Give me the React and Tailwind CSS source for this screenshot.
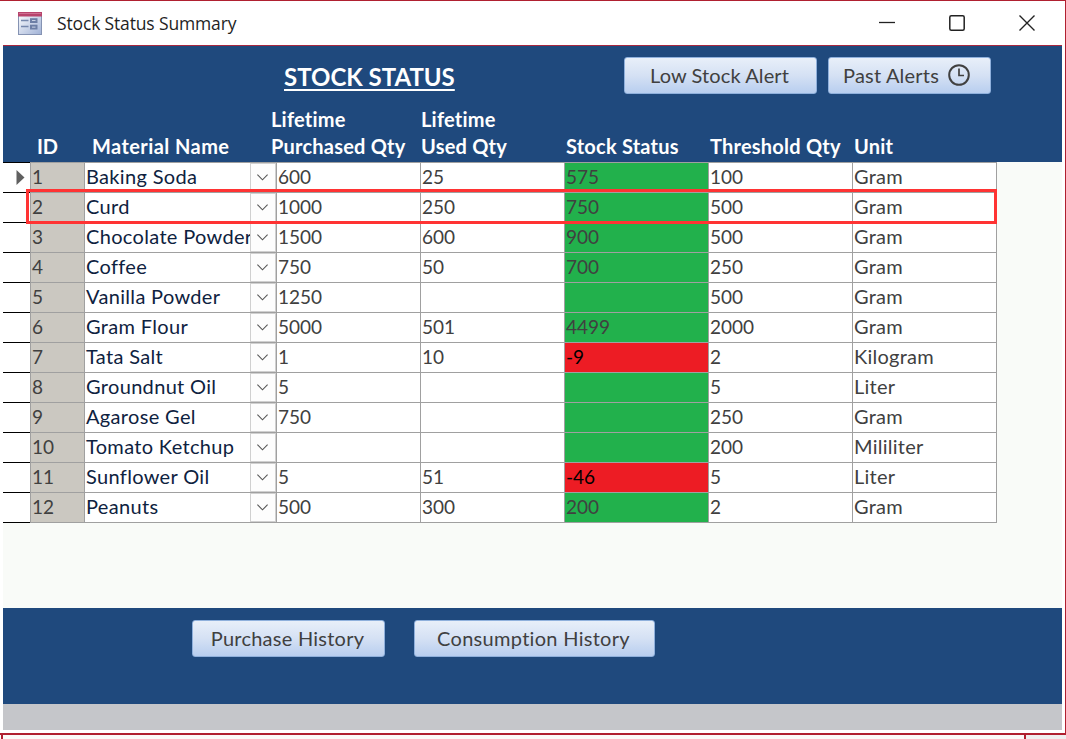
const rows = [
  ["1", "Baking Soda", "600", "25", "575", "100", "Gram"],
  ["2", "Curd", "1000", "250", "750", "500", "Gram"],
  ["3", "Chocolate Powder", "1500", "600", "900", "500", "Gram"],
  ["4", "Coffee", "750", "50", "700", "250", "Gram"],
  ["5", "Vanilla Powder", "1250", "", "", "500", "Gram"],
  ["6", "Gram Flour", "5000", "501", "4499", "2000", "Gram"],
  ["7", "Tata Salt", "1", "10", "-9", "2", "Kilogram"],
  ["8", "Groundnut Oil", "5", "", "", "5", "Liter"],
  ["9", "Agarose Gel", "750", "", "", "250", "Gram"],
  ["10", "Tomato Ketchup", "", "", "", "200", "Mililiter"],
  ["11", "Sunflower Oil", "5", "51", "-46", "5", "Liter"],
  ["12", "Peanuts", "500", "300", "200", "2", "Gram"],
];

function TitleBar() {
  return (
    <div className="flex h-[44px] shrink-0 items-center bg-white pl-[18px]">
      <svg width="24" height="23" viewBox="0 0 24 23" className="shrink-0">
        <defs>
          <linearGradient id="formBody" x1="0" y1="0" x2="1" y2="1">
            <stop offset="0" stopColor="#ffffff" />
            <stop offset="1" stopColor="#9fb1d6" />
          </linearGradient>
        </defs>
        <rect x="0.5" y="0.5" width="23" height="22" fill="url(#formBody)" stroke="#8593b3" />
        <rect x="0" y="0" width="24" height="4.5" fill="#b8446c" />
        <rect x="1" y="1" width="22" height="1" fill="#cf6f92" />
        <path d="M3 8.5H10.5M3 14.5H10.5" stroke="#7688ad" strokeWidth="1.6" />
        <rect x="13" y="7.2" width="5.5" height="2.8" fill="#dfe6f4" stroke="#6d7fa6" strokeWidth="2" />
        <rect x="13" y="13.7" width="5.5" height="2.8" fill="#dfe6f4" stroke="#6d7fa6" strokeWidth="2" />
      </svg>
      <span className="ml-[15px] whitespace-nowrap font-['Open_Sans','Noto_Sans',sans-serif] text-[17.5px] leading-6 tracking-[-0.15px] text-[#1f1f1f]">
        Stock Status Summary
      </span>
      <div className="ml-auto flex items-center gap-[54px] pr-[30px]">
        <svg width="16" height="16" viewBox="0 0 16 16">
          <path d="M0 7.5H16" stroke="#222" strokeWidth="1.3" />
        </svg>
        <svg width="16" height="16" viewBox="0 0 16 16" fill="none">
          <rect x="0.8" y="0.8" width="14.4" height="14.4" rx="1.5" stroke="#222" strokeWidth="1.5" />
        </svg>
        <svg width="16" height="16" viewBox="0 0 16 16">
          <path d="M0.5 0.5L15.5 15.5M15.5 0.5L0.5 15.5" stroke="#222" strokeWidth="1.4" />
        </svg>
      </div>
    </div>
  );
}

function Button({ className, children }) {
  return (
    <button
      className={
        "flex h-[37px] shrink-0 items-center justify-center whitespace-nowrap rounded-[3px] border border-[#8fb0dc] bg-linear-to-b from-[#e8eff9] via-[#d5e1f4] to-[#b8ceef] text-[20px] leading-[25px] text-[#404040] " +
        className
      }
    >
      {children}
    </button>
  );
}

function Row({ row, index }) {
  const [id, name, bought, used, stock, threshold, unit] = row;
  const low = stock.startsWith("-");
  const last = index === rows.length - 1;
  const cell = "flex items-center overflow-hidden whitespace-nowrap border-l border-t border-[#a0a0a0] pb-0.5 pl-px ";
  return (
    <div className={"grid grid-cols-[27px_54px_192px_144px_144px_144px_144px_145px] leading-[25px] " + (last ? "h-[31px]" : "h-[30px]")}>
      <div className={"flex items-center justify-end border-t border-black bg-white pr-[5px] " + (last ? "border-b" : "")}>
        {index === 0 && (
          <svg width="9" height="15" viewBox="0 0 9 15">
            <path d="M0.5 0L8.5 7.5L0.5 15Z" fill="#606060" />
          </svg>
        )}
      </div>
      <div className={cell + "bg-[#cbc8c1] " + (last ? "border-b" : "")}>{id}</div>
      <div className={"flex border-l border-t border-[#a0a0a0] bg-white " + (last ? "border-b" : "")}>
        <div className="flex w-[165px] items-center overflow-hidden whitespace-nowrap pb-0.5 pl-px text-[20px] tracking-[0.33px] text-[#0e2240]">
          {name}
        </div>
        <div className="flex h-[29px] w-[26px] items-center justify-center border border-[#d0d0d0] bg-[#fdfdfd] pr-px">
          <svg width="11" height="7" viewBox="0 0 11 7" fill="none">
            <path d="M0.4 0.7L5.5 5.8L10.6 0.7" stroke="#555" strokeWidth="1.1" />
          </svg>
        </div>
      </div>
      <div className={cell + "bg-white " + (last ? "border-b" : "")}>{bought}</div>
      <div className={cell + "bg-white " + (last ? "border-b" : "")}>{used}</div>
      <div className={cell + (low ? "bg-[#ed1c24] text-black " : "bg-[#22b14c] ") + (last ? "border-b" : "")}>{stock}</div>
      <div className={cell + "bg-white " + (last ? "border-b" : "")}>{threshold}</div>
      <div className={cell + "border-r bg-white text-[20px] tracking-[0.25px] " + (last ? "border-b" : "")}>{unit}</div>
    </div>
  );
}

export default function App() {
  return (
    <div className="flex h-[739px] w-[1066px] flex-col overflow-hidden bg-[#fafbf9] font-[Lato,sans-serif] text-[19px] text-[#404040]">
      <div className="flex h-[735px] shrink-0 flex-col border-b-2 border-r border-t border-b-[#b02030] border-r-[#b02030] border-t-[#b02030] bg-white">
        <TitleBar />
        <div className="ml-[3px] flex w-[1059px] flex-col">
          <header className="flex h-[117px] flex-col border-t border-[#a8283f] bg-[#1f497d] font-bold text-white">
            <div className="flex h-[60px] items-start pl-[281px] pt-[11px]">
              <h1 className="w-[171px] whitespace-nowrap pt-px text-[24px] leading-[38px] underline decoration-2 underline-offset-[3px]">
                STOCK STATUS
              </h1>
              <div className="ml-[169px] flex gap-[11px] font-normal">
                <Button className="w-[193px] pr-0.5 tracking-[0.1px]">Low Stock Alert</Button>
                <Button className="w-[163px] gap-[9px] pr-[6px] tracking-[0.2px]">
                  <span>Past Alerts</span>
                  <svg width="22" height="22" viewBox="0 0 22 22" fill="none" stroke="#404040" className="-mt-px">
                    <circle cx="11" cy="11" r="9.8" strokeWidth="2" />
                    <path d="M11 4.5V11.5H16" strokeWidth="1.7" />
                  </svg>
                </Button>
              </div>
            </div>
            <div className="grid h-[54px] grid-cols-[55px_179px_150px_145px_144px_144px_1fr] items-end whitespace-nowrap pl-[34px] text-[20px] leading-[27px] tracking-[0.22px]">
              <div className="tracking-[-0.3px]">ID</div>
              <div className="tracking-[0.42px]">Material Name</div>
              <div>Lifetime<br />Purchased Qty</div>
              <div>Lifetime<br />Used Qty</div>
              <div>Stock Status</div>
              <div>Threshold Qty</div>
              <div>Unit</div>
            </div>
          </header>
          <main className="relative h-[446px] bg-[#f9fbf8]">
            {rows.map((row, i) => (
              <Row key={row[0]} row={row} index={i} />
            ))}
            <div className="absolute left-[23px] top-[27px] h-[35px] w-[971px] border-[3px] border-[#ff3333]" />
          </main>
          <footer className="flex h-[96px] gap-[29px] bg-[#1f497d] pl-[189px] pt-[12px]">
            <Button className="w-[193px] pr-0.5 tracking-[0.25px]">Purchase History</Button>
            <Button className="w-[241px] pr-0.5 tracking-[0.3px]">Consumption History</Button>
          </footer>
          <div className="h-[26px] bg-[#c5c6ca]" />
        </div>
      </div>
      <div className="flex h-1">
        <div className="ml-px w-[1025px] border-x-2 border-[#b02030]" />
        <div className="flex-1 bg-[#efefef]" />
      </div>
    </div>
  );
}
